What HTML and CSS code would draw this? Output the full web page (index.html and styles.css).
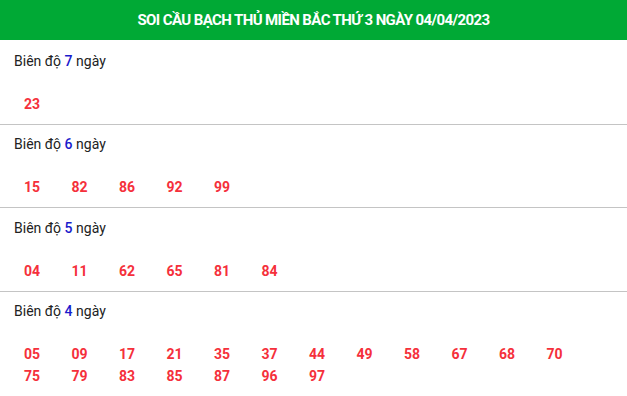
FILE: index.html
```html
<!DOCTYPE html>
<html lang="vi">
<head>
<meta charset="utf-8">
<link rel="stylesheet" href="styles.css">
</head>
<body>
<div class="box">
  <h2 class="title">SOI CẦU BẠCH THỦ MIỀN BẮC THỨ 3 NGÀY 04/04/2023</h2>
  <div class="group">
    <div class="label">Biên độ <b>7</b> ngày</div>
    <div class="nums"><span>23</span></div>
  </div>
  <div class="group">
    <div class="label">Biên độ <b>6</b> ngày</div>
    <div class="nums"><span>15</span><span>82</span><span>86</span><span>92</span><span>99</span></div>
  </div>
  <div class="group">
    <div class="label">Biên độ <b>5</b> ngày</div>
    <div class="nums"><span>04</span><span>11</span><span>62</span><span>65</span><span>81</span><span>84</span></div>
  </div>
  <div class="group">
    <div class="label">Biên độ <b>4</b> ngày</div>
    <div class="nums"><span>05</span><span>09</span><span>17</span><span>21</span><span>35</span><span>37</span><span>44</span><span>49</span><span>58</span><span>67</span><span>68</span><span>70</span><span>75</span><span>79</span><span>83</span><span>85</span><span>87</span><span>96</span><span>97</span></div>
  </div>
</div>
</body>
</html>
```
FILE: styles.css
```css
* { box-sizing: border-box; }
html, body { margin: 0; padding: 0; background: #fff; }
body { font-family: Roboto, "Liberation Sans", sans-serif; font-size: 14px; color: #222; }
.title {
  margin: 0 0 1px;
  height: 40px;
  line-height: 40px;
  background: #00a935;
  color: #fff;
  text-align: center;
  font-size: 15px;
  font-weight: 700;
  letter-spacing: -0.6px;
}
.group {
  border-bottom: 1px solid #c4c4c4;
  padding: 8.5px 0 9.1px;
}
.group:last-child { border-bottom: none; }
.label {
  padding-left: 14px;
  line-height: 22px;
}
.label b { color: #1a1acc; font-weight: 500; }
.nums {
  display: flex;
  flex-wrap: wrap;
  margin-top: 21px;
  padding: 0 24px;
}
.nums span {
  width: 47.5px;
  line-height: 22px;
  color: #f5303b;
  font-weight: 700;
  font-size: 14px;
}
```
